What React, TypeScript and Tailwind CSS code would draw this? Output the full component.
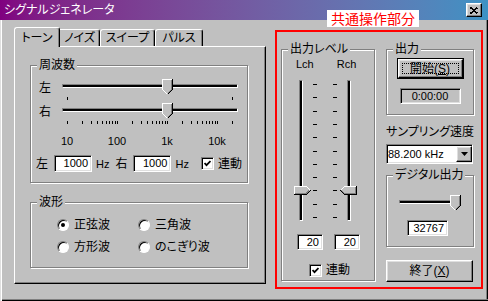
import React from 'react'

const raised =
  'border border-t-white border-l-white border-r-black border-b-black shadow-[inset_-1px_-1px_0_#808080,inset_1px_1px_0_#dfdfdf]'
const sunken =
  'border border-t-[#808080] border-l-[#808080] border-r-white border-b-white shadow-[inset_1px_1px_0_#000,inset_-1px_-1px_0_#dfdfdf]'
const groove = 'border border-[#808080] border-r-white border-b-white bg-black'

const freqs: number[] = []
for (const d of [10, 100, 1000]) for (let k = 1; k <= 9; k++) freqs.push(d * k)
freqs.push(10000, 20000)
const tickX = (f: number) => Math.round(5 + 50 * Math.log10(f / 10))

const ThumbDown = () => (
  <svg width="11" height="16" shapeRendering="crispEdges" fill="none">
    <polygon points="0,0 11,0 11,11 5.5,16 0,11" fill="#c0c0c0" />
    <path d="M0.5 11 V0.5 H10" stroke="#fff" />
    <path d="M0.5 10.5 L5.5 15.5" stroke="#fff" />
    <path d="M10.5 0 V10.5 L5.5 15.5" stroke="#000" />
    <path d="M9.5 1 V10.5 L5.5 14.5" stroke="#808080" />
  </svg>
)

const ThumbRight = () => (
  <svg width="18" height="9" shapeRendering="crispEdges" fill="none">
    <polygon points="0,0 12,0 17,4.5 12,9 0,9" fill="#c0c0c0" />
    <path d="M0.5 9 V0.5 H12.5 L16.5 4.5" stroke="#fff" />
    <path d="M0 8.5 H12.5 L16.5 4.5" stroke="#000" />
    <path d="M1 7.5 H12 L15 4.5" stroke="#808080" />
  </svg>
)

const ThumbLeft = () => (
  <svg width="18" height="9" shapeRendering="crispEdges" fill="none">
    <polygon points="0,4.5 5,0 18,0 18,9 5,9" fill="#c0c0c0" />
    <path d="M17 0.5 H5.5 L1.5 4.5" stroke="#fff" />
    <path d="M17.5 0 V8.5 H5.5 L1.5 4.5" stroke="#000" />
    <path d="M16.5 1 V7.5 H5.5 L2.5 4.5" stroke="#808080" />
  </svg>
)

function Group({ label, className, children }: { label: string; className?: string; children?: React.ReactNode }) {
  return (
    <div className={`relative border border-[#808080] shadow-[1px_1px_0_#fff,inset_1px_1px_0_#fff] ${className ?? ''}`}>
      <span className="absolute -top-[8px] left-[6px] px-[2px] bg-[#c0c0c0] leading-[14px] whitespace-nowrap">{label}</span>
      {children}
    </div>
  )
}

function HSlider({ ticks }: { ticks: number[] }) {
  return (
    <div className="relative w-[176px] h-[22px]">
      <div className={`absolute left-0 right-0 top-[5px] h-[4px] ${groove}`} />
      <div className="absolute left-[100px] top-0">
        <ThumbDown />
      </div>
      <svg className="absolute left-0 top-[18px]" width="176" height="3">
        {ticks.map((f) => (
          <rect key={f} x={tickX(f)} y={0} width={1} height={3} fill="#000" />
        ))}
      </svg>
    </div>
  )
}

function VSlider({ side }: { side: 'left' | 'right' }) {
  return (
    <div className="relative w-[18px] h-[141px]">
      <div className={`absolute top-0 bottom-0 w-[4px] ${groove} ${side === 'left' ? 'left-[5px]' : 'left-[8px]'}`} />
      <div className="absolute top-[106px] left-0">{side === 'left' ? <ThumbRight /> : <ThumbLeft />}</div>
    </div>
  )
}

function Edit({ value, className }: { value: string; className?: string }) {
  return (
    <div className={`${sunken} bg-white flex items-center justify-end pr-[3px] text-[11px] leading-none ${className ?? ''}`}>
      {value}
    </div>
  )
}

function Check() {
  return (
    <div className={`w-[13px] h-[13px] shrink-0 bg-white ${sunken} flex items-center justify-center`}>
      <svg width="7" height="7">
        <path d="M0.5 3 L2.5 5.2 L6.5 1" stroke="#000" strokeWidth="1.8" fill="none" />
      </svg>
    </div>
  )
}

function Radio({ on }: { on?: boolean }) {
  return (
    <div className="w-[12px] h-[12px] shrink-0 rounded-full bg-white border border-t-[#808080] border-l-[#808080] border-r-white border-b-white shadow-[inset_1px_1px_0_#000] flex items-center justify-center">
      {on && <div className="w-[4px] h-[4px] rounded-full bg-black" />}
    </div>
  )
}

export default function App() {
  const vticks = Array.from({ length: 11 }, (_, i) => Math.round(4 + i * 13.3))
  return (
    <div className="relative w-[488px] h-[301px] overflow-hidden bg-[#c0c0c0] text-[12px] leading-[14px] text-black font-['Liberation_Sans','Noto_Sans_CJK_JP',sans-serif] [font-feature-settings:'palt'] flex flex-col">
      {/* title bar */}
      <div className="h-[20px] shrink-0 flex items-center bg-linear-to-r from-[#800080] to-[#3c92c4] pl-[4px] pr-[6px]">
        <span className="text-white">シグナルジェネレータ</span>
        <div className={`ml-auto w-[16px] h-[14px] bg-[#c0c0c0] ${raised} flex items-center justify-center`}>
          <svg width="8" height="7" shapeRendering="crispEdges">
            <path d="M0.5 0.5 L7.5 6.5 M7.5 0.5 L0.5 6.5" stroke="#000" strokeWidth="1.7" />
          </svg>
        </div>
      </div>

      {/* body */}
      <div className="flex-1 flex items-start pl-[14px] shadow-[inset_1px_0_0_#dfdfdf,inset_2px_0_0_#fff,inset_0_-1px_0_#000,inset_0_-2px_0_#808080,inset_-1px_0_0_#000,inset_-2px_0_0_#808080]">
        {/* tab control */}
        <div className="mt-[7px] w-[252px] flex flex-col">
          <div className="relative z-10 flex items-end h-[19px]">
            <div className="w-[46px] h-[20px] -mb-[1px] bg-[#c0c0c0] border-t border-l border-r border-t-white border-l-white border-r-black rounded-t-[3px] shadow-[inset_-1px_0_0_#808080] flex items-center justify-center">
              トーン
            </div>
            <div className="w-[40px] h-[17px] bg-[#c0c0c0] border-t border-r border-t-white border-r-black rounded-tr-[3px] shadow-[inset_-1px_0_0_#808080] flex items-center justify-center">
              ノイズ
            </div>
            <div className="w-[55px] h-[17px] bg-[#c0c0c0] border-t border-l border-r border-t-white border-l-white border-r-black rounded-t-[3px] shadow-[inset_-1px_0_0_#808080] flex items-center justify-center">
              スイープ
            </div>
            <div className="w-[48px] h-[17px] bg-[#c0c0c0] border-t border-l border-r border-t-white border-l-white border-r-black rounded-t-[3px] shadow-[inset_-1px_0_0_#808080] flex items-center justify-center">
              パルス
            </div>
          </div>
          <div className="w-[252px] h-[238px] border border-t-white border-l-white border-r-black border-b-black shadow-[inset_-1px_-1px_0_#808080] pl-[15px] pt-[18px]">
            <Group label="周波数" className="w-[218px] h-[118px]">
              <div className="flex items-start mt-[13px] ml-[8px]">
                <span className="w-[23px] mt-[2px]">左</span>
                <HSlider ticks={[10, 20000]} />
              </div>
              <div className="flex items-start mt-[2px] ml-[8px]">
                <span className="w-[23px] mt-[2px]">右</span>
                <HSlider ticks={freqs} />
              </div>
              <div className="flex ml-[11px] mt-[9px] text-[11px] leading-[14px]">
                <span className="w-[50px] text-center">10</span>
                <span className="w-[50px] text-center">100</span>
                <span className="w-[50px] text-center">1k</span>
                <span className="w-[50px] text-center">10k</span>
              </div>
              <div className="flex items-center h-[17px] ml-[5px] mt-[7px]">
                <span>左</span>
                <Edit value="1000" className="ml-[6px] w-[38px] h-[17px]" />
                <span className="ml-[4px] text-[11px]">Hz</span>
                <span className="ml-[6px]">右</span>
                <Edit value="1000" className="ml-[6px] w-[38px] h-[17px]" />
                <span className="ml-[4px] text-[11px]">Hz</span>
                <div className="ml-[12px]">
                  <Check />
                </div>
                <span className="ml-[4px]">連動</span>
              </div>
            </Group>
            <Group label="波形" className="mt-[19px] w-[218px] h-[66px]">
              <div className="grid grid-cols-[81px_auto] gap-y-[8px] ml-[26px] mt-[15px]">
                <div className="flex items-center gap-[5px] h-[14px]">
                  <Radio on />
                  <span>正弦波</span>
                </div>
                <div className="flex items-center gap-[5px] h-[14px]">
                  <Radio />
                  <span>三角波</span>
                </div>
                <div className="flex items-center gap-[5px] h-[14px]">
                  <Radio />
                  <span>方形波</span>
                </div>
                <div className="flex items-center gap-[5px] h-[14px]">
                  <Radio />
                  <span>のこぎり波</span>
                </div>
              </div>
            </Group>
          </div>
        </div>

        {/* common controls (annotated in red) */}
        <div className="ml-[9px] mt-[10px] w-[208px] h-[259px] border-2 border-[#ff0000] flex items-start">
          <Group label="出力レベル" className="ml-[4px] mt-[17px] w-[94px] h-[232px]">
            <div className="flex mt-[7px] ml-[14px] text-[11px] leading-[14px]">
              <span>Lch</span>
              <span className="ml-[23px]">Rch</span>
            </div>
            <div className="flex mt-[9px] ml-[12px]">
              <VSlider side="left" />
              <svg width="27" height="141">
                {vticks.map((y) => (
                  <g key={y}>
                    <rect x={1} y={y} width={4} height={1} fill="#000" />
                    <rect x={21} y={y} width={4} height={1} fill="#000" />
                  </g>
                ))}
              </svg>
              <VSlider side="right" />
            </div>
            <div className="flex mt-[13px] ml-[15px] gap-[11px]">
              <Edit value="20" className="w-[26px] h-[16px]" />
              <Edit value="20" className="w-[26px] h-[16px]" />
            </div>
            <div className="flex items-center mt-[13px] ml-[27px]">
              <Check />
              <span className="ml-[4px]">連動</span>
            </div>
          </Group>

          <div className="ml-[11px] mt-[17px] w-[88px] flex flex-col">
            <Group label="出力" className="w-[88px] h-[66px] flex flex-col items-center">
              <div className="mt-[8px] w-[67px] h-[21px] border border-black">
                <div className={`relative w-full h-full bg-[#c0c0c0] ${raised} flex items-center justify-center`}>
                  <span className="absolute inset-[3px] border border-dotted border-black" />
                  <span>
                    開始(<span className="underline">S</span>)
                  </span>
                </div>
              </div>
              <div className={`mt-[9px] w-[61px] h-[16px] ${sunken} flex items-center justify-center text-[11px] leading-none`}>
                0:00:00
              </div>
            </Group>
            <span className="mt-[10px] whitespace-nowrap">サンプリング速度</span>
            <div className={`mt-[5px] w-[87px] h-[20px] bg-white ${sunken} flex items-center`}>
              <span className="pl-[1px] flex-1 text-[11px] leading-none">88.200 kHz</span>
              <div className={`w-[16px] h-[16px] bg-[#c0c0c0] ${raised} flex items-center justify-center`}>
                <svg width="7" height="4">
                  <path d="M0 0H7L3.5 4Z" fill="#000" />
                </svg>
              </div>
            </div>
            <Group label="デジタル出力" className="mt-[11px] w-[88px] h-[72px]">
              <div className="relative mt-[19px] ml-[12px] w-[60px] h-[16px]">
                <div className={`absolute left-0 w-[56px] top-[5px] h-[4px] ${groove}`} />
                <div className="absolute left-[51px] top-0">
                  <ThumbDown />
                </div>
              </div>
              <Edit value="32767" className="mt-[9px] ml-[20px] w-[41px] h-[16px]" />
            </Group>
            <div className={`mt-[13px] w-[87px] h-[22px] bg-[#c0c0c0] ${raised} flex items-center justify-center`}>
              <span>
                終了(<span className="underline">X</span>)
              </span>
            </div>
          </div>
        </div>
      </div>

      {/* annotation label */}
      <div className="absolute left-[327px] top-[10px] w-[92px] h-[17px] bg-white text-[#ff0000] text-[14px] leading-[17px] text-center [font-feature-settings:normal] font-['Noto_Sans_CJK_JP',sans-serif]">
        共通操作部分
      </div>
    </div>
  )
}
